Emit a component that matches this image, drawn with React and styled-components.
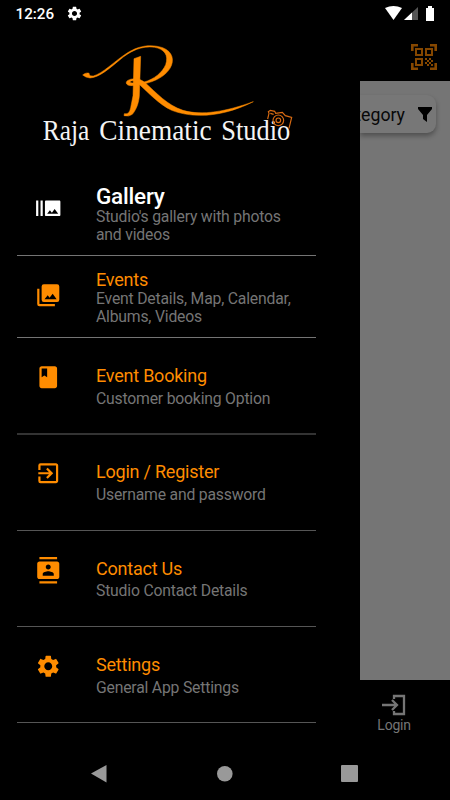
import React from "react";
import styled, { createGlobalStyle } from "styled-components";
import { MdBurstMode, MdClass, MdExitToApp, MdContacts, MdSettings } from "react-icons/md";

const Global = createGlobalStyle`
  * { box-sizing: border-box; }
  body { margin: 0; background: #000; font-family: Roboto, sans-serif; }
`;
const Screen = styled.div`
  width: 450px; height: 800px; background: #000; overflow: hidden;
  display: flex; flex-direction: column;
`;
const StatusBar = styled.header`
  height: 28px; padding: 0 15px 0 15.5px; display: flex; align-items: center; color: #fff;
`;
const Clock = styled.span`
  font-size: 15.2px; font-weight: 500; line-height: 28px; width: 50px; white-space: nowrap;
`;
const SettingsIcon = styled(MdSettings)`
  width: 17px; height: 17px; margin-top: -2px;
`;
const StatusIcons = styled.svg`
  margin: -1px 0 0 auto; display: block;
`;
const Body = styled.div`
  height: 721px; display: flex; flex: none;
`;
const Drawer = styled.nav`
  width: 360px; height: 720px; flex: none; padding-left: 17px;
`;
const Logo = styled.svg`
  display: block; width: 280px; height: 120px; margin: 7px 0 0 13px;
`;
const Menu = styled.ul`
  list-style: none; margin: 20px 0 0; padding: 0; width: 299px;
`;
const Item = styled.li`
  height: ${(p) => p.$height}px; display: flex; padding-top: ${(p) => p.$top}px;
  border-bottom: ${(p) => (p.$rule ?? "1px solid #747474")};
  color: ${(p) => (p.$active ? "#fff" : "#ff8c00")};
`;
const IconSlot = styled.span`
  width: 79px; margin-top: ${(p) => p.$drop}px; padding-left: 18px; flex: none;
  svg { display: block; width: 26.5px; height: 26.5px; }
`;
const Copy = styled.div`
  flex: 1; white-space: nowrap;
`;
const Title = styled.div`
  font-size: ${(p) => (p.$active ? 22.5 : 18)}px; font-weight: ${(p) => (p.$active ? 500 : 400)};
  letter-spacing: -.22px; line-height: 22px;
`;
const Subtitle = styled.div`
  color: #757575; font-size: 15.75px; letter-spacing: -.2px; line-height: 17.5px;
  margin-top: ${(p) => p.$gap}px; white-space: pre-line;
`;
const Page = styled.main`
  width: 90px; height: 772px; flex: none; overflow: hidden;
`;
const AppBar = styled.div`
  height: 53px; display: flex; justify-content: flex-end; padding: 16px 13px 0 0;
`;
const Content = styled.section`
  height: 599px; background: #757575; padding-top: 14px;
`;
const Filter = styled.div`
  width: 76px; height: 38px; border-radius: 0 9px 9px 0; background: #777;
  box-shadow: 0 3px 5px rgba(0, 0, 0, .32); display: flex; align-items: center; color: #080808;
`;
const FilterLabel = styled.span`
  width: 45px; overflow: hidden; display: flex; justify-content: flex-end; font-size: 17.7px;
  padding-top: 1px;
`;
const LoginTab = styled.div`
  height: 66px; padding: 14px 0 0; width: 68px; display: flex; flex-direction: column;
  align-items: center; color: #757575; font-size: 14px; letter-spacing: -.25px; line-height: 16px; gap: 1px;
`;
const NavBar = styled.footer`
  height: 51px; flex: none; display: flex; align-items: flex-start;
`;

function PhotoStack() {
  return (
    <svg viewBox="0 0 24 24" fill="currentColor">
      <path fillRule="evenodd" d="M22 16V4a2 2 0 0 0-2-2H8a2 2 0 0 0-2 2v12a2 2 0 0 0 2 2h12a2 2 0 0 0 2-2zM8.600 15.600l2.900-3.600 1.700 2.200 2.800-3.600 3.600 5zM2 6v14a2 2 0 0 0 2 2h14v-2H4V6z" />
    </svg>
  );
}

const items = [
  { title: "Gallery", sub: "Studio's gallery with photos\nand videos", Icon: MdBurstMode, height: 81, top: 10, drop: 10, gap: 1, active: true },
  { title: "Events", sub: "Event Details, Map, Calendar,\nAlbums, Videos", Icon: PhotoStack, height: 82, top: 13, drop: 13, gap: -1 },
  { title: "Event Booking", sub: "Customer booking Option", Icon: MdClass, height: 97, top: 27, drop: -1, gap: 3, rule: "2px solid #333" },
  { title: "Login / Register", sub: "Username and password", Icon: MdExitToApp, height: 96, top: 26, drop: -1, gap: 3, rule: "1px solid #555" },
  { title: "Contact Us", sub: "Studio Contact Details", Icon: MdContacts, height: 96, top: 26.5, drop: -0.5, gap: 2.5, rule: "1px solid #555" },
  { title: "Settings", sub: "General App Settings", Icon: MdSettings, height: 96, top: 27, drop: -1, gap: 3, rule: "1px solid #555" },
];

const logoWords = [
  { word: "Raja", x: 38, width: 140 },
  { word: "Cinematic", x: 208, width: 337 },
  { word: "Studio", x: 574, width: 207 },
];

function StudioLogo() {
  return (
    <Logo viewBox="0 0 840 360">
      <g fill="#ff8c00" stroke="#ff8c00" strokeWidth="1.5">
        <path d="M158 120C166 112 181 112 178 119Q179 124 190 123C218 115 250 82 284 59C324 30 365 27 398 38C429 50 434 77 420 100C405 124 377 139 341 147L340 142C374 132 397 112 407 89C417 60 402 42 374 37C334 31 300 49 270 74C236 102 208 127 180 129Q167 128 158 120Z" />
        <path d="M312 71L332 64L328 184C325 210 317 226 307 238Q297 246 282 242L283 236Q298 240 302 218L309 182Z" />
        <path fillRule="evenodd" d="M314 131C296 132 285 139 290 147C297 156 316 150 329 149C355 173 387 208 425 226C493 252 581 245 670 200C590 229 515 243 459 226C411 210 381 175 343 141Q333 132 314 131ZM299 142Q302 135 315 138Q314 148 299 142Z" />
      </g>
      <g fill="#f4f4f4" fontFamily="Liberation Serif, serif" fontSize="88">
        {logoWords.map(({ word, x, width }) => (
          <text key={word} x={x} y="316" textLength={width} lengthAdjust="spacingAndGlyphs">{word}</text>
        ))}
      </g>
      <g fill="none" stroke="#d96b12" strokeWidth="3.5">
        <path d="M713 252L717 235L715 230L721 226L734 229L737 235L757 232L766 242L785 247L777 280M721 235L731 238" />
        <circle cx="745" cy="256" r="16" /><circle cx="745" cy="256" r="7" />
      </g>
    </Logo>
  );
}

export default function App() {
  return (
    <>
      <Global />
      <Screen>
        <StatusBar>
          <Clock>12:26</Clock>
          <SettingsIcon />
          <StatusIcons width="50" height="16" viewBox="385 6 50 16">
            <path fill="#fff" d="M385 8Q393.500 4 402 8L393.500 20Z" />
            <path fill="#555" d="M418 7V20H404Z" />
            <path fill="#fff" d="M412 12.500V20H404ZM428 6H432V8H434V21H426V8H428Z" />
          </StatusIcons>
        </StatusBar>
        <Body>
          <Drawer>
            <StudioLogo />
            <Menu>
              {items.map(({ title, sub, Icon, height, top, drop, gap, active, rule }) => (
                <Item key={title} $height={height} $top={top} $active={active} $rule={rule}>
                  <IconSlot $drop={drop}><Icon /></IconSlot>
                  <Copy>
                    <Title $active={active}>{title}</Title>
                    <Subtitle $gap={gap}>{sub}</Subtitle>
                  </Copy>
                </Item>
              ))}
            </Menu>
          </Drawer>
          <Page>
            <AppBar>
              <svg width="26" height="26" viewBox="0 0 26 26" fill="none" stroke="#854700" strokeWidth="2">
                <path strokeWidth="2.6" d="M1.300 7V1.300H7M19 1.300H24.700V7M24.700 19V24.700H19M7 24.700H1.300V19" />
                <path d="M5 5H11V11H5ZM15 5H21V11H15ZM5 15H11V21H5Z" />
                <path fill="#854700" stroke="none" d="M14 14h2v2h-2zm4 0h2v2h-2zm-2 2h2v2h-2zm4 0h2v2h-2zm-6 2h2v2h-2zm4 0h2v2h-2zm-2 2h2v2h-2zm4 0h2v2h-2z" />
              </svg>
            </AppBar>
            <Content>
              <Filter>
                <FilterLabel>Category</FilterLabel>
                <svg width="31" height="18" viewBox="0 0 31 18"><path fill="#000" d="M13 2H27V4L22 10V17L18 14V10L13 4Z" /></svg>
              </Filter>
            </Content>
            <LoginTab>
              <svg width="24" height="22" viewBox="0 0 24 22" fill="none" stroke="#757575" strokeWidth="2.3">
                <path d="M12 5V2H22V20H12V17M0 11H15M10 6L15 11L10 16" />
              </svg>
              Login
            </LoginTab>
          </Page>
        </Body>
        <NavBar>
          <svg width="450" height="51" viewBox="0 749 450 51" fill="#999">
            <path d="M91 773.5L106.500 765V782.500Z" /><circle cx="224.800" cy="773.700" r="7.800" /><rect x="341" y="765" width="17" height="17" rx="1" />
          </svg>
        </NavBar>
      </Screen>
    </>
  );
}
